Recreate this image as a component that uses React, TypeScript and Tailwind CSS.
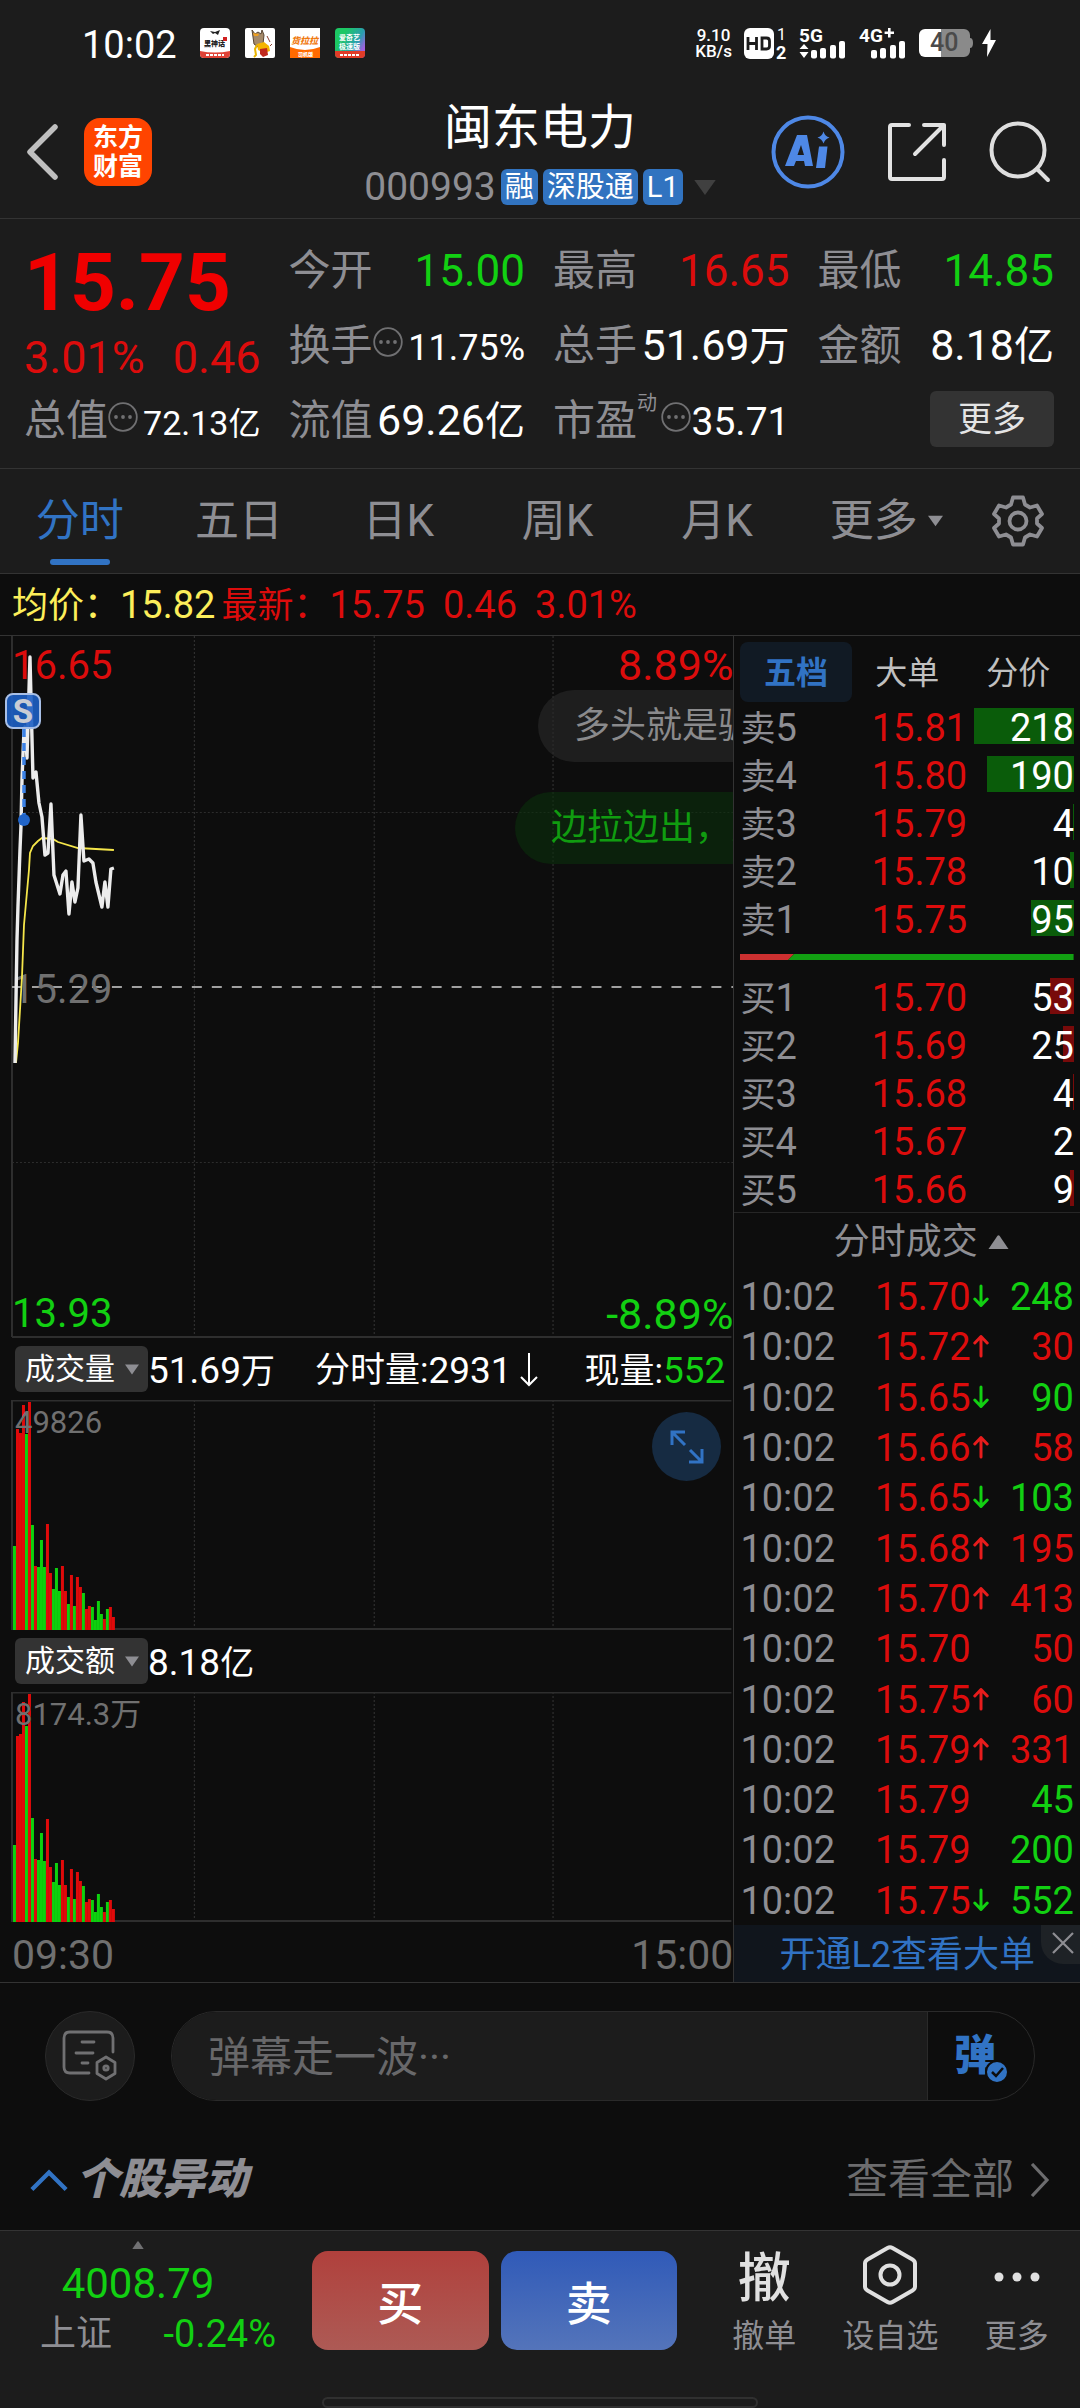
import React from "react";

const FONT = "font-['Roboto','Noto_Sans_CJK_SC',sans-serif]";

type Dir = "up" | "down" | "";

const sells = [
  { label: "卖", n: 5, price: "15.81", vol: 218 },
  { label: "卖", n: 4, price: "15.80", vol: 190 },
  { label: "卖", n: 3, price: "15.79", vol: 4 },
  { label: "卖", n: 2, price: "15.78", vol: 10 },
  { label: "卖", n: 1, price: "15.75", vol: 95 },
];
const buys = [
  { label: "买", n: 1, price: "15.70", vol: 53 },
  { label: "买", n: 2, price: "15.69", vol: 25 },
  { label: "买", n: 3, price: "15.68", vol: 4 },
  { label: "买", n: 4, price: "15.67", vol: 2 },
  { label: "买", n: 5, price: "15.66", vol: 9 },
];

const trades: { price: string; dir: Dir; vol: number; up: boolean }[] = [
  { price: "15.70", dir: "down", vol: 248, up: false },
  { price: "15.72", dir: "up", vol: 30, up: true },
  { price: "15.65", dir: "down", vol: 90, up: false },
  { price: "15.66", dir: "up", vol: 58, up: true },
  { price: "15.65", dir: "down", vol: 103, up: false },
  { price: "15.68", dir: "up", vol: 195, up: true },
  { price: "15.70", dir: "up", vol: 413, up: true },
  { price: "15.70", dir: "", vol: 50, up: true },
  { price: "15.75", dir: "up", vol: 60, up: true },
  { price: "15.79", dir: "up", vol: 331, up: true },
  { price: "15.79", dir: "", vol: 45, up: false },
  { price: "15.79", dir: "", vol: 200, up: false },
  { price: "15.75", dir: "down", vol: 552, up: false },
];

/* One letter per minute: r = rising, g = falling */
const barColours = "grrrgrgrgggrrgggrrgrgrrgrrggggrgrr";
const volumeBars = [
  84, 201, 197, 225, 196, 228, 105, 64, 63, 90, 63, 106, 57, 41, 62, 39, 64, 39, 26, 55, 24, 53, 43, 37, 21, 24, 23, 10,
  29, 16, 11, 21, 23, 13,
];
const amountBars = [
  77, 186, 188, 220, 196, 228, 104, 63, 62, 89, 61, 103, 55, 40, 59, 37, 62, 37, 25, 53, 23, 50, 41, 36, 20, 23, 22, 10,
  28, 15, 10, 20, 22, 13,
];

const pricePoints =
  "15,1063 16,1000 17,940 18,906 20,850 21,826 22,780 24,730 25,727 27,758 30,657 33,778 36,772 39,803 42,817 45,855 48,853 51,804 54,875 60,894 63,875 66,871 69,914 72,882 75,902 78,888 81,815 84,861 89,859 93,863 96,882 102,907 105,882 108,907 111,869 114,868";
const averagePoints =
  "16,1063 18,1043 22,977 24,925 27,892 29,870 30,853 33,846 38,841 42,838 53,839 58,842 78,848 114,850";

function Down({ className }: { className: string }) {
  return (
    <svg viewBox="0 0 20 14" className={className} fill="currentColor" aria-hidden="true">
      <path d="M0 0h20L10 14z" />
    </svg>
  );
}

function Up({ className }: { className: string }) {
  return (
    <svg viewBox="0 0 20 14" className={className} fill="currentColor" aria-hidden="true">
      <path d="M0 14h20L11 0.8q-1-1-2 0z" />
    </svg>
  );
}

function MoreDots() {
  return (
    <svg viewBox="0 0 30 30" className="mb-2 size-[30px] shrink-0 text-[#707072]" aria-hidden="true">
      <circle cx="15" cy="15" r="13.8" fill="none" stroke="currentColor" strokeWidth="1.8" />
      <circle cx="8" cy="15" r="1.9" fill="currentColor" />
      <circle cx="15" cy="15" r="1.9" fill="currentColor" />
      <circle cx="22" cy="15" r="1.9" fill="currentColor" />
    </svg>
  );
}

function Signal({ label, plus, arrows }: { label: string; plus?: boolean; arrows?: boolean }) {
  return (
    <svg viewBox="0 0 48 32" className="h-8 w-12 overflow-visible" fill="#fff" aria-label={label}>
      <text x="0" y="15" fontSize="19" fontWeight="700">
        {label}
      </text>
      {plus && <path d="M29 1h2.6v3.4H35V7h-3.4v3.4H29V7h-3.4V4.400H29z" />}
      {arrows && <path d="M0.500 22l4.500-5 4.500 5zM0.500 25h9L5 31z" />}
      <rect x="12" y="23" width="6" height="8.500" rx="2" />
      <rect x="21" y="21" width="6" height="10.500" rx="2" />
      <rect x="31" y="18" width="6" height="13.500" rx="2" />
      <rect x="40" y="14" width="6" height="17.500" rx="2" />
    </svg>
  );
}

function StatusBar() {
  return (
    <div className="flex h-[86px] items-center justify-between pr-[84px] pl-[82px]">
      <div className="flex items-center gap-[15px]">
        <span className="mr-2 pt-1 text-[38px] leading-none text-white">10:02</span>
        <svg viewBox="0 0 30 30" className="size-[30px]" aria-hidden="true">
          <rect width="30" height="30" rx="4" fill="#fff" />
          <path d="M0 23q15 3 30 0v3a4 4 0 0 1-4 4H4a4 4 0 0 1-4-4z" fill="#e04438" />
          <path d="M10 3l5 1 5-2-2 5-3-2-2 1z" fill="#222" />
          <text x="4" y="18" fontSize="7" fontWeight="900" fill="#222">黑神话</text>
          <rect x="23" y="9" width="4" height="4" fill="#d02020" />
          <path d="M6 27h18" stroke="#fff" strokeWidth="2" strokeDasharray="3 1" />
        </svg>
        <svg viewBox="0 0 30 30" className="size-[30px]" aria-hidden="true">
          <rect width="30" height="30" rx="2" fill="#fff" />
          <path d="M7 2l3 4 3-2 3 2 1-4 2 5-1 9-5 3-4-3z" fill="#a58a6a" stroke="#5a4632" strokeWidth="1" />
          <path d="M8 5l6 1-1 2H9z" fill="#f0a020" />
          <path d="M12 16l7-2 5 4 1 5-6 2-6-3z" fill="#f5b400" />
          <path d="M15 21l7-1 1 7-5 2-3-3z" fill="#c0281c" />
          <path d="M12 17l-2 4 1 6-2 2" stroke="#e8b400" strokeWidth="2" fill="none" />
          <path d="M22 8l3 6M25 18l2-2" stroke="#8a4030" strokeWidth="1" />
        </svg>
        <svg viewBox="0 0 30 30" className="size-[30px]" aria-hidden="true">
          <rect width="30" height="30" fill="#fff" />
          <path d="M0 19q15 6 30 0v11H0z" fill="#ff6a00" />
          <text x="1" y="16" fontSize="9" fontWeight="900" fontStyle="italic" fill="#f07a10">货拉拉</text>
          <text x="8" y="28" fontSize="5" fontWeight="900" fill="#fff">司机版</text>
        </svg>
        <svg viewBox="0 0 30 30" className="size-[30px]" aria-hidden="true">
          <defs>
            <linearGradient id="iqy" x1="0" y1="0" x2="1" y2="0.6">
              <stop offset="0.3" stopColor="#1cc864" />
              <stop offset="0.75" stopColor="#2a9db0" />
              <stop offset="1" stopColor="#a060e0" />
            </linearGradient>
          </defs>
          <rect width="30" height="30" rx="4" fill="url(#iqy)" />
          <path d="M0 23h30v3a4 4 0 0 1-4 4H4a4 4 0 0 1-4-4z" fill="#e03c28" />
          <text x="4" y="12" fontSize="7" fontWeight="700" fill="#fff">爱奇艺</text>
          <text x="4" y="21" fontSize="7" fontWeight="700" fill="#fff">极速版</text>
          <path d="M5 27h20" stroke="#fff" strokeWidth="2" strokeDasharray="3 1" />
        </svg>
      </div>
      <div className="flex items-center gap-3 text-white">
        <div className="text-center text-[17px] leading-4 font-medium">
          9.10
          <br />
          KB/s
        </div>
        <svg viewBox="0 0 43 31" className="h-[31px] w-[43px] overflow-visible" aria-label="HD">
          <rect width="30" height="31" rx="6" fill="#fff" />
          <path d="M4 9v13M12.500 9v13M4 15.500h8.500M18 10v11h4.500q3 0 3-3v-5q0-3-3-3z" fill="none" stroke="#1c1c1c" strokeWidth="2.800" />
          <text x="33" y="12" fontSize="16" fill="#fff">1</text>
          <text x="32" y="31" fontSize="18" fontWeight="700" fill="#fff">2</text>
        </svg>
        <Signal label="5G" arrows />
        <Signal label="4G" plus />
        <div className="flex items-center gap-2">
          <svg viewBox="0 0 55 28" className="h-7 w-[55px]" aria-label="40%">
            <path d="M6 0h16v28H6a6 6 0 0 1-6-6V6a6 6 0 0 1 6-6z" fill="#fff" />
            <path d="M22 0h23a6 6 0 0 1 6 6v3q3 0 3 5t-3 5v3a6 6 0 0 1-6 6H22z" fill="#8a8a8a" />
            <text x="11" y="22" fontSize="25" fontWeight="500" fill="#4a4a4a">40</text>
          </svg>
          <svg viewBox="0 0 14 28" className="h-7 w-3.5" fill="#fff" aria-hidden="true">
            <path d="M8.500 0L0 15h5.500L5 28 14 11H8.500z" />
          </svg>
        </div>
      </div>
    </div>
  );
}

function Header() {
  return (
    <header className="grid h-[133px] grid-cols-[1fr_auto_1fr] items-center border-b border-[#333]">
      <div className="flex items-center gap-6 pl-[26px]">
        <button aria-label="返回">
          <svg viewBox="0 0 34 56" className="h-14 w-[34px]" fill="none" stroke="#bfbfbf" strokeWidth="5.500" strokeLinecap="round" strokeLinejoin="round">
            <path d="M29 3L4 28l25 25" />
          </svg>
        </button>
        <a href="#home" className="grid size-[68px] place-content-center rounded-2xl bg-[#ff4400] text-[25px] leading-[29px] font-bold text-white">
          <span>东方</span>
          <span>财富</span>
        </a>
      </div>
      <div className="flex flex-col items-center pt-2">
        <h1 className="text-[48px] leading-[62px] text-white">闽东电力</h1>
        <button className="flex h-14 items-center gap-[5px] text-[29px] leading-9 text-white">
          <span className="text-[39px] text-[#8e8e93]">000993</span>
          <span className="rounded-md bg-[#3173c0] px-1">融</span>
          <span className="rounded-md bg-[#3173c0] px-1">深股通</span>
          <span className="rounded-md bg-[#3173c0] px-1">L1</span>
          <Down className="ml-1.5 h-[15px] w-[22px] text-[#404040]" />
        </button>
      </div>
      <div className="flex items-center justify-end gap-[42px] pr-[29px]">
        <button aria-label="AI">
          <svg viewBox="0 0 74 74" className="size-[74px]">
            <circle cx="37" cy="37" r="34.500" fill="none" stroke="#4e88e6" strokeWidth="4" />
            <path d="M26 20h10l6 31h-8l-1-5h-8l-2 5h-9zM30 30l-3.500 10H33z" fill="#4e88e6" fillRule="evenodd" />
            <path d="M48 31.500h8.500L54 53h-9z" fill="#4e88e6" />
            <path d="M52.500 16.500q1.500 5 6 6-4.500 1.500-6 6-1.500-4.500-6-6 4.500-1 6-6z" fill="#4e88e6" />
          </svg>
        </button>
        <button aria-label="分享">
          <svg viewBox="0 0 60 60" className="size-[60px]" fill="none" stroke="#e2e2e2" strokeWidth="4" strokeLinecap="round" strokeLinejoin="round">
            <path d="M22 3H5q-2 0-2 2v50q0 2 2 2h50q2 0 2-2V38M37 3h20v20M57 3L28 32" />
          </svg>
        </button>
        <button aria-label="搜索">
          <svg viewBox="0 0 62 62" className="size-[62px]" fill="none" stroke="#dedede" strokeWidth="4" strokeLinecap="round">
            <circle cx="29" cy="29" r="26.500" />
            <path d="M48 48l11 11" />
          </svg>
        </button>
      </div>
    </header>
  );
}

function Quote({ label, children }: { label: React.ReactNode; children: React.ReactNode }) {
  return (
    <div className="flex h-[75px] items-center justify-between leading-none whitespace-nowrap">
      <dt className="flex items-center text-[42px] text-[#8e8e93]">{label}</dt>
      <dd className="text-[43px] text-white">{children}</dd>
    </div>
  );
}

function QuotePanel() {
  return (
    <dl className="grid grid-cols-4 gap-x-7 border-b border-[#333] pt-3.5 pr-[26px] pb-2.5 pl-6">
      <div className="row-span-2 flex flex-col">
        <div className="text-[80px] leading-[100px] font-bold text-[#f00000]">15.75</div>
        <div className="flex justify-between text-[45px] leading-[50px] text-[#dc0c0c]">
          <span>3.01%</span>
          <span>0.46</span>
        </div>
      </div>
      <Quote label="今开">
        <span className="text-[44px] text-[#12d012]">15.00</span>
      </Quote>
      <Quote label="最高">
        <span className="text-[44px] text-[#dc0c0c]">16.65</span>
      </Quote>
      <Quote label="最低">
        <span className="text-[44px] text-[#12d012]">14.85</span>
      </Quote>
      <Quote label={<>换手<MoreDots /></>}>
        <span className="text-[36px]">11.75%</span>
      </Quote>
      <Quote label="总手">
        51.69<span className="text-[40px]">万</span>
      </Quote>
      <Quote label="金额">
        8.18<span className="text-[40px]">亿</span>
      </Quote>
      <Quote label={<>总值<MoreDots /></>}>
        <span className="text-[34px]">72.13</span>
        <span className="text-[32px]">亿</span>
      </Quote>
      <Quote label="流值">
        69.26<span className="text-[40px]">亿</span>
      </Quote>
      <Quote label={<>市盈<span className="mr-1 mb-9 text-[20px]">动</span><MoreDots /></>}>
        <span className="text-[39px]">35.71</span>
      </Quote>
      <div className="flex h-[75px] items-center justify-end">
        <button className="mb-1 h-14 w-[124px] rounded-md bg-[#333] text-[34px] leading-none text-[#e4e4e4]">更多</button>
      </div>
    </dl>
  );
}

function Tabs() {
  return (
    <nav className="flex h-[105px] border-b border-[#333] text-[44px] text-[#8e8e93]">
      <div className="grid flex-1 grid-cols-6">
        <button className="relative text-[#3173c4]">
          分时
          <span className="absolute bottom-2 left-1/2 h-1.5 w-[60px] -translate-x-1/2 rounded-full bg-[#3173c4]" />
        </button>
        <button>五日</button>
        <button>日K</button>
        <button>周K</button>
        <button>月K</button>
        <button className="flex items-center justify-center gap-2.5 pl-5">
          更多
          <Down className="h-3 w-[15px]" />
        </button>
      </div>
      <button aria-label="设置" className="flex w-[124px] items-center justify-center">
        <svg viewBox="0 0 52 52" className="size-[52px]" fill="none" stroke="currentColor" strokeWidth="3.800" strokeLinejoin="round">
          <path d="M21 2.500h10l2 7 5 3 7-2 5 8.500-5 4.500v5l5 4.500-5 8.500-7-2-5 3-2 7H21l-2-7-5-3-7 2-5-8.500 5-4.500v-5L2 19l5-8.500 7 2 5-3z" />
          <circle cx="26" cy="26" r="8.500" />
        </svg>
      </button>
    </nav>
  );
}

function GridLines({ h }: { h: number }) {
  return (
    <g stroke="#363636" strokeWidth="1" strokeDasharray="2 2">
      <path d={`M194.5 0V${h}M374.5 0V${h}M553.5 0V${h}`} />
    </g>
  );
}

function PriceChart() {
  return (
    <div className="relative h-[702px] overflow-hidden text-[40px] leading-none">
      <svg viewBox="0 636 734 702" preserveAspectRatio="none" className="block h-full w-full" fill="none" aria-label="分时走势">
        <g transform="translate(0 636)">
          <GridLines h={702} />
        </g>
        <path d="M12 812.500H734M12 1162.500H734" stroke="#2c2c2c" strokeDasharray="2 2" />
        <path d="M12 636V1337M12 1337H732" stroke="#2e2e2e" strokeWidth="2" />
        <path d="M12 987H734" stroke="#a0a0a0" strokeWidth="2" strokeDasharray="10 10" />
      </svg>
      <span className="absolute top-2.5 left-3 text-[#dc0c0c]">16.65</span>
      <span className="absolute top-2 right-0 text-[43px] text-[#dc0c0c]">8.89%</span>
      <span className="absolute top-[334px] left-3 text-[#707070]">15.29</span>
      <span className="absolute bottom-1 left-3 text-[#12d012]">13.93</span>
      <span className="absolute right-0 bottom-0.5 text-[43px] text-[#12d012]">-8.89%</span>
      <svg viewBox="0 636 734 702" preserveAspectRatio="none" className="absolute inset-0 h-full w-full" fill="none" aria-hidden="true">
        <polyline points={averagePoints} stroke="#f5e64a" strokeWidth="1.800" />
        <polyline points={pricePoints} stroke="#ececec" strokeWidth="3.400" strokeLinejoin="round" />
        <path d="M24 729V815" stroke="#3c82e6" strokeWidth="3.500" strokeDasharray="8 6" />
        <circle cx="24" cy="820" r="6" fill="#2064c8" />
      </svg>
      <span className="absolute top-[57px] left-[5px] grid size-9 place-content-center rounded-lg border-2 border-[#a8bfe6] bg-[#1d5fc4]/90 text-[33px] font-bold text-[#c8ccd4]">
        S
      </span>
      <div className="absolute top-[54px] left-[538px] flex h-[72px] items-center rounded-full bg-[#2a2a2a]/60 px-9 text-[36px] whitespace-nowrap text-[#8a8a8c]">
        多头就是骗炮
      </div>
      <div className="absolute top-[156px] left-[515px] flex h-[72px] items-center rounded-full bg-[#0a2e0c]/60 px-9 text-[36px] whitespace-nowrap text-[#109c10]">
        边拉边出，人气
      </div>
    </div>
  );
}

function BarPane({ bars, max, children }: { bars: number[]; max: string; children?: React.ReactNode }) {
  return (
    <div className="relative h-[230px]">
      <svg viewBox="0 0 734 230" preserveAspectRatio="none" className="block h-full w-full" aria-hidden="true">
        <GridLines h={230} />
        <path d="M12 0V230M12 0.500H732M12 229H732" fill="none" stroke="#2e2e2e" strokeWidth="2" />
        {bars.map((h, i) => (
          <rect key={i} x={13 + i * 3} y={230 - h} width="3" height={h} fill={barColours[i] === "r" ? "#e00a0a" : "#0ed00e"} />
        ))}
      </svg>
      <span className="absolute top-[7px] left-[15px] text-[31px] leading-8 text-[#707070]">{max}</span>
      {children}
    </div>
  );
}

function Picker({ children }: { children: React.ReactNode }) {
  return (
    <button className="flex h-[46px] w-[133px] shrink-0 items-center gap-2.5 rounded-md bg-[#333] pl-2.5 text-[30px] leading-none text-white">
      {children}
      <Down className="h-[11px] w-3.5 text-[#8e8e93]" />
    </button>
  );
}

function ChartColumn() {
  return (
    <section className="border-r border-[#333]">
      <PriceChart />
      <div className="flex h-[62px] items-center pr-2 pl-[15px] text-[37px] leading-none whitespace-nowrap text-white">
        <Picker>成交量</Picker>
        <span className="pt-0.5">
          51.69<span className="text-[34px]">万</span>
        </span>
        <span className="ml-10 flex items-center pt-0.5">
          <span className="text-[35px]">分时量:</span>2931
          <svg viewBox="0 0 18 34" className="ml-2 h-[34px] w-[18px]" fill="none" stroke="#fff" strokeWidth="2" aria-hidden="true">
            <path d="M9 0V32M1 24l8 8 8-8" />
          </svg>
        </span>
        <span className="ml-auto pt-0.5">
          <span className="text-[35px]">现量:</span>
          <span className="text-[#12d012]">552</span>
        </span>
      </div>
      <BarPane bars={volumeBars} max="49826">
        <button aria-label="全屏" className="absolute top-3 right-3 grid size-[69px] place-content-center rounded-full bg-[#162b42]">
          <svg viewBox="0 0 34 34" className="size-[34px]" fill="none" stroke="#3173c4" strokeWidth="3">
            <path d="M2 15V2h13M2 2l13 13M32 19v13H19M32 32L20 20" />
          </svg>
        </button>
      </BarPane>
      <div className="flex h-[62px] items-center pl-[15px] text-[37px] leading-none text-white">
        <Picker>成交额</Picker>
        <span className="pt-0.5">
          8.18<span className="text-[34px]">亿</span>
        </span>
      </div>
      <BarPane bars={amountBars} max="8174.3万" />
      <div className="flex h-[60px] items-center justify-between pt-1.5 pl-3 text-[41px] leading-none text-[#707070]">
        <span>09:30</span>
        <span>15:00</span>
      </div>
    </section>
  );
}

function BookTable({ rows, side }: { rows: typeof sells; side: "sell" | "buy" }) {
  return (
    <table className="w-full table-fixed text-[38px] leading-none" aria-label={side === "sell" ? "卖盘" : "买盘"}>
      <tbody>
        {rows.map((r) => (
          <tr key={r.n} className="h-12">
            <th scope="row" className="w-[31%] p-0 pt-1 text-left font-normal text-[#8e8e93]">
              <span className="text-[35px]">{r.label}</span>
              {r.n}
            </th>
            <td className="w-[37%] p-0 pt-1 text-right text-[#dc0c0c]">{r.price}</td>
            <td className="relative p-0 pt-1 text-right text-white">
              <span
                className={`absolute top-1.5 right-0 h-9 ${side === "sell" ? "bg-[#0a5c0a]" : "bg-[#780a0a]"}`}
                style={{ width: Math.floor((r.vol * 100) / 218) }}
              />
              <span className="relative">{r.vol}</span>
            </td>
          </tr>
        ))}
      </tbody>
    </table>
  );
}

function Arrow({ dir }: { dir: Dir }) {
  if (!dir) return null;
  return (
    <svg
      viewBox="0 0 16 24"
      className={`mx-auto h-6 w-4 ${dir === "up" ? "text-[#e81c1c]" : "rotate-180 text-[#12d012]"}`}
      fill="none"
      stroke="currentColor"
      strokeWidth="3"
      strokeLinecap="round"
      strokeLinejoin="round"
      aria-hidden="true"
    >
      <path d="M8 22V2.500M1.800 9L8 2.500 14.200 9" />
    </svg>
  );
}

function BookColumn() {
  return (
    <section className="flex flex-col">
      <div className="px-1.5 pt-1.5">
        <div className="grid h-[60px] grid-cols-3 text-[32px] text-[#c0c0c0]">
          <button className="rounded-lg bg-[#111a24] pt-0.5 font-bold text-[#3173c4]">五档</button>
          <button className="pt-0.5">大单</button>
          <button className="pt-0.5">分价</button>
        </div>
        <BookTable rows={sells} side="sell" />
        <div className="flex h-[30px] items-center">
          <svg viewBox="0 0 333 6" preserveAspectRatio="none" className="h-1.5 w-full" aria-hidden="true">
            <path d="M0 0H54L48 6H0z" fill="#cc3030" />
            <path d="M54 0H333V6H48z" fill="#12a012" />
          </svg>
        </div>
        <BookTable rows={buys} side="buy" />
      </div>
      <button className="flex h-[59px] items-center justify-center gap-2.5 border-t border-[#262626] pl-7 text-[36px] leading-none text-[#8e8e93]">
        分时成交
        <Up className="h-3.5 w-[21px]" />
      </button>
      <div className="px-1.5">
        <table className="h-[654px] w-full table-fixed text-[38px] leading-none" aria-label="分时成交">
          <tbody>
            {trades.map((t, i) => (
              <tr key={i}>
                <td className="w-[31%] p-0 pt-0.5 text-[#8e8e93]">10:02</td>
                <td className="w-[38%] p-0 pt-0.5 text-right text-[#dc0c0c]">{t.price}</td>
                <td className="w-[6%] p-0">
                  <Arrow dir={t.dir} />
                </td>
                <td className={`p-0 pt-0.5 text-right ${t.up ? "text-[#dc0c0c]" : "text-[#12d012]"}`}>{t.vol}</td>
              </tr>
            ))}
          </tbody>
        </table>
      </div>
      <div className="relative flex flex-1 items-center justify-center bg-[#10151c] pt-0.5">
        <a href="#l2" className="text-[36px] leading-none text-[#3173c4]">
          开通L2查看大单
        </a>
        <button aria-label="关闭" className="absolute top-0 right-0 flex size-[39px] items-center justify-end rounded-bl-[22px] bg-[#1e2226] pr-1.5 pb-1">
          <svg viewBox="0 0 22 22" className="size-[22px]" stroke="#8e8e93" strokeWidth="2.200">
            <path d="M1 1l20 20M21 1L1 21" />
          </svg>
        </button>
      </div>
    </section>
  );
}

function Comments() {
  return (
    <section className="border-t border-[#333]">
      <div className="flex items-center gap-9 pt-7 pr-[45px] pl-[45px]">
        <button aria-label="弹幕设置" className="grid size-[90px] shrink-0 place-content-center rounded-full border border-[#2a2a2a] bg-[#1c1c1c]">
          <svg viewBox="0 0 58 52" className="h-[52px] w-[58px]" fill="none" stroke="#707072" strokeWidth="2.800" strokeLinecap="round" strokeLinejoin="round">
            <path d="M28 43H9q-6 0-6-6V8q0-6 6-6h37q6 0 6 6v14M21 12h12M15 23h17M21 33h6" />
            <path d="M45 27l9 5.500v11L45 49l-9-5.500v-11z" />
            <circle cx="45" cy="38" r="2.200" />
          </svg>
        </button>
        <div className="flex h-[90px] flex-1 overflow-hidden rounded-full border border-[#2a2a2a]">
          <input
            aria-label="弹幕"
            placeholder="弹幕走一波···"
            className="min-w-0 flex-1 bg-[#1c1c1c] pt-0.5 pl-9 text-[42px] text-white placeholder:text-[#68686a]"
          />
          <button aria-label="弹幕开关" className="relative w-[107px] border-l border-[#2a2a2a] pr-3 text-[42px] leading-none font-black text-[#3173c4]">
            弹
            <svg viewBox="0 0 24 24" className="absolute right-[25px] bottom-4 size-6" aria-hidden="true">
              <circle cx="12" cy="12" r="11" fill="#3173c4" stroke="#0d0d0d" strokeWidth="2" />
              <path d="M7 12l4 4 7-8" fill="none" stroke="#0d0d0d" strokeWidth="2.500" />
            </svg>
          </button>
        </div>
      </div>
      <div className="flex h-[129px] items-center pt-7 pr-[30px] pl-[30px]">
        <svg viewBox="0 0 40 24" className="h-6 w-[38px]" fill="none" stroke="#3173c4" strokeWidth="4.500" aria-hidden="true">
          <path d="M2 22L20 4l18 18" />
        </svg>
        <h2 className="ml-2 text-[43px] leading-none font-black text-[#8e8e93] italic">个股异动</h2>
        <a href="#all" className="ml-auto flex items-center gap-4 text-[42px] leading-none text-[#6c6c6e]">
          查看全部
          <svg viewBox="0 0 20 34" className="h-[34px] w-5" fill="none" stroke="currentColor" strokeWidth="3.200" aria-hidden="true">
            <path d="M2 1l15 16L2 33" />
          </svg>
        </a>
      </div>
    </section>
  );
}

function Footer() {
  return (
    <footer className="border-t border-[#333] bg-[#1c1c1c]">
      <div className="flex h-[138px] items-stretch">
        <button className="flex w-[300px] shrink-0 flex-col items-center pt-2.5 pr-6 text-[#12d012]">
          <Up className="h-2 w-5 shrink-0 text-[#707072]" />
          <span className="mt-3 text-[42px] leading-[46px]">4008.79</span>
          <span className="flex w-full items-center justify-between pt-0.5 pl-10 text-[38px] leading-[50px]">
            <span className="text-[36px] text-[#8e8e93]">上证</span>
            <span>-0.24%</span>
          </span>
        </button>
        <div className="flex flex-1 gap-3 pt-5 pl-3">
          <button className="h-[99px] flex-1 rounded-2xl bg-linear-to-b from-[#b0403c] to-[#ad5a55] pt-1.5 text-[46px] leading-none font-medium text-white">
            买
          </button>
          <button className="h-[99px] flex-1 rounded-2xl bg-linear-to-b from-[#305ab8] to-[#5474ba] pt-1.5 text-[46px] leading-none font-medium text-white">
            卖
          </button>
        </div>
        <div className="grid w-[403px] grid-cols-3 pl-6 text-[32px] text-[#8e8e93]">
          <button className="flex flex-col items-center">
            <span className="flex h-[84px] items-center pt-3 text-[53px] leading-none font-medium text-[#e0e0e0]">撤</span>
            <span className="leading-[42px]">撤单</span>
          </button>
          <button className="flex flex-col items-center">
            <span className="flex h-[84px] items-center pt-1">
              <svg viewBox="0 0 54 60" className="h-[60px] w-[54px]" fill="none" stroke="#e0e0e0" strokeWidth="4" strokeLinejoin="round">
                <path d="M24.500 3q2.500-1.500 5 0l20 11.500q2.500 1.500 2.500 4v23q0 2.500-2.500 4L29.500 57q-2.500 1.500-5 0l-20-11.500q-2.500-1.500-2.500-4v-23q0-2.500 2.500-4z" />
                <circle cx="27" cy="30" r="9.500" />
              </svg>
            </span>
            <span className="leading-[42px]">设自选</span>
          </button>
          <button className="flex flex-col items-center">
            <span className="flex h-[84px] items-center pt-2">
              <svg viewBox="0 0 46 10" className="h-2.5 w-[46px]" fill="#e0e0e0">
                <circle cx="5" cy="5" r="4.500" />
                <circle cx="23" cy="5" r="4.500" />
                <circle cx="41" cy="5" r="4.500" />
              </svg>
            </span>
            <span className="leading-[42px]">更多</span>
          </button>
        </div>
      </div>
      <div className="mx-auto mt-7 h-[11px] w-[436px] rounded-full border-2 border-[#303030]" />
    </footer>
  );
}

export default function App() {
  return (
    <div className={`min-h-screen bg-[#0d0d0d] ${FONT}`}>
      <div className="bg-[#1c1c1c]">
        <StatusBar />
        <Header />
        <QuotePanel />
        <Tabs />
      </div>
      <div className="flex h-[62px] items-center border-b border-[#333] pl-3 text-[38px] leading-none whitespace-nowrap text-[#dc0c0c]">
        <span className="text-[#fcee5a]">
          <span className="text-[36px]">均价：</span>15.82
        </span>
        <span className="ml-1.5">
          <span className="text-[36px]">最新：</span>15.75
        </span>
        <span className="ml-[18px]">0.46</span>
        <span className="ml-[18px]">3.01%</span>
      </div>
      <main className="grid grid-cols-[68%_32%]">
        <ChartColumn />
        <BookColumn />
      </main>
      <Comments />
      <Footer />
    </div>
  );
}
